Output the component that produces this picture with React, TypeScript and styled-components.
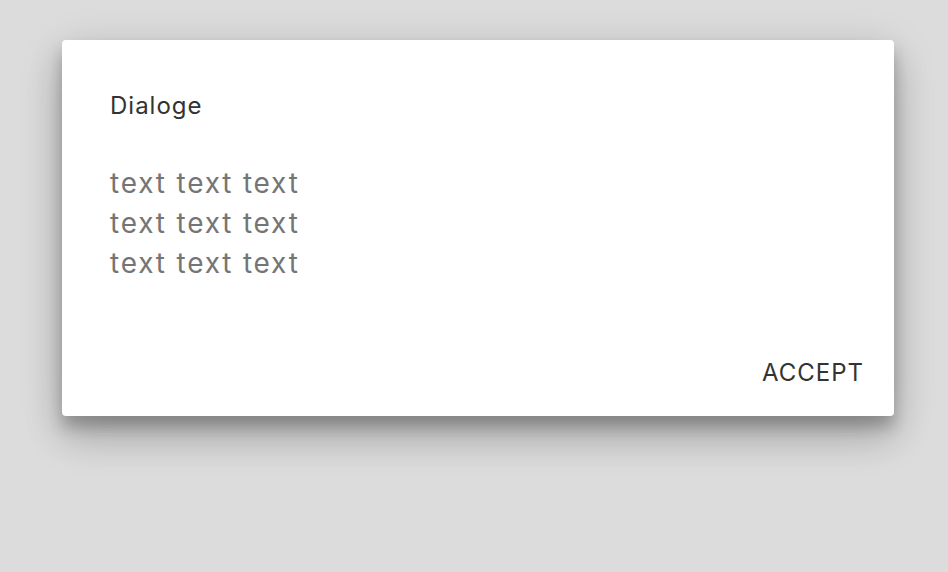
import styled, { createGlobalStyle } from 'styled-components'

const GlobalStyle = createGlobalStyle`
  html, body {
    margin: 0;
    padding: 0;
    background: #dcdcdc;
    font-family: Inter, 'Noto Sans', sans-serif;
  }
`

const Backdrop = styled.div`
  width: 948px;
  height: 572px;
  box-sizing: border-box;
  padding: 40px 54px 0 62px;
  background: #dcdcdc;
`

const Dialog = styled.div`
  width: 832px;
  height: 376px;
  box-sizing: border-box;
  background: #fff;
  border-radius: 4px;
  box-shadow: 0 24px 38px rgba(0, 0, 0, 0.16), 0 9px 46px rgba(0, 0, 0, 0.14),
    0 11px 15px rgba(0, 0, 0, 0.22);
  padding: 50px 22px 21px 48px;

  display: flex;
  flex-direction: column;
`

const Title = styled.h2`
  margin: 0;
  font-size: 24px;
  font-weight: 400;
  line-height: 32px;
  letter-spacing: 1px;
  color: #333;
`

const Content = styled.div`
  margin-top: 41px;
  flex: 1;
  font-size: 28px;
  line-height: 40px;
  letter-spacing: 1.8px;
  color: #757575;
`

const Actions = styled.div`
  display: flex;
  justify-content: flex-end;
`

const Button = styled.button`
  border: none;
  background: none;
  padding: 6px 8px;
  font-family: inherit;
  font-size: 24px;
  line-height: 32px;
  letter-spacing: 1px;
  color: #333;
  cursor: pointer;
`

const App = () => (
  <>
    <GlobalStyle />
    <Backdrop>
      <Dialog>
        <Title>Dialoge</Title>
        <Content>
          text text text
          <br />
          text text text
          <br />
          text text text
        </Content>
        <Actions>
          <Button type='button'>ACCEPT</Button>
        </Actions>
      </Dialog>
    </Backdrop>
  </>
)

export default App
